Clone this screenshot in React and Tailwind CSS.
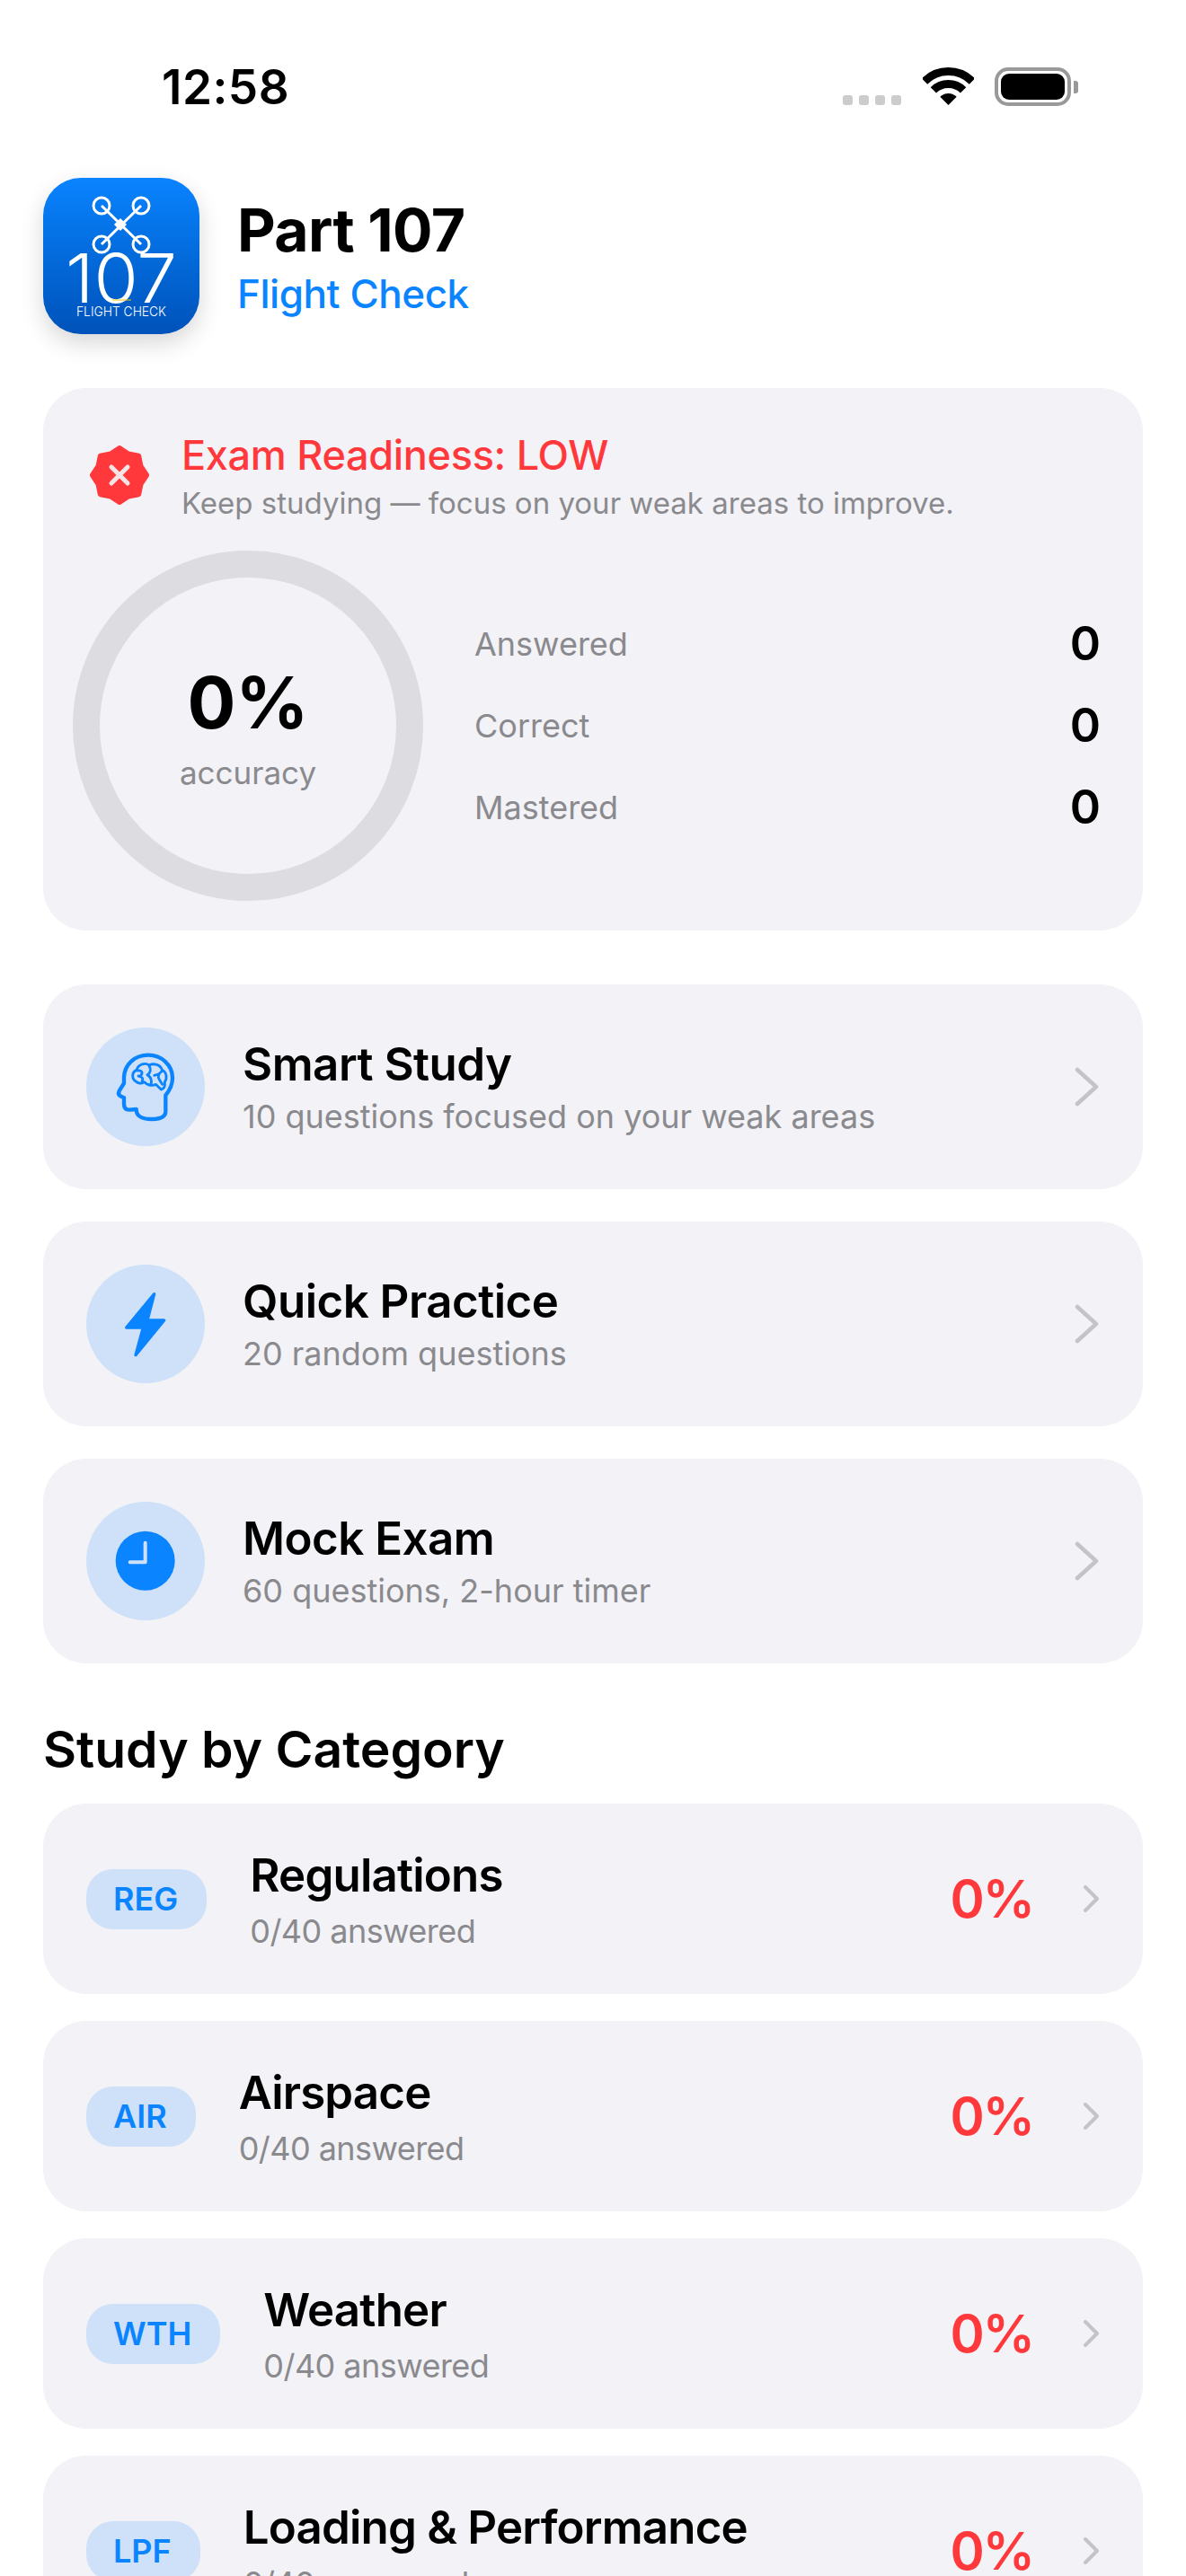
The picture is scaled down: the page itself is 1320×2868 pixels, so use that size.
import React from 'react';

const sealPoints = () => {
  const pts = [];
  for (let i = 0; i < 16; i++) {
    const r = i % 2 === 0 ? 30 : 25.5;
    const a = (i * Math.PI) / 8 - Math.PI / 2;
    pts.push(`${(33 + r * Math.cos(a)).toFixed(2)},${(33 + r * Math.sin(a)).toFixed(2)}`);
  }
  return pts.join(' ');
};

const Chevron = ({ big }) => (
  <svg
    width={big ? 27 : 17}
    height={big ? 44 : 30}
    viewBox={big ? '0 0 27 44' : '0 0 17 30'}
    fill="none"
    stroke="#c4c4c8"
    strokeWidth={big ? 4.5 : 4}
    strokeLinecap="round"
    strokeLinejoin="round"
    className="shrink-0 mr-[1px]"
  >
    <polyline points={big ? '3,3 24,22 3,41' : '2,2 15,15 2,28'} />
  </svg>
);

const AppIcon = () => (
  <div className="size-[174px] shrink-0 rounded-[42px] bg-gradient-to-b from-[#0a84ff] to-[#0052b9] shadow-[0_10px_26px_rgba(0,0,0,0.16)] overflow-hidden">
    <svg width="174" height="174" viewBox="0 0 174 174" fill="none">
      <g stroke="#fff" strokeWidth="3">
        <line x1="65" y1="31" x2="109" y2="74" />
        <line x1="109" y1="31" x2="65" y2="74" />
        <circle cx="65" cy="31" r="9" strokeWidth="3" />
        <circle cx="109" cy="31" r="9" strokeWidth="3" />
        <circle cx="65" cy="74" r="9" strokeWidth="3" />
        <circle cx="109" cy="74" r="9" strokeWidth="3" />
      </g>
      <rect x="81" y="47" width="10" height="10" fill="#fff" transform="rotate(45 86 52)" />
      <text x="87" y="139" textAnchor="middle" fill="#fff" fontFamily="Inter, sans-serif" fontSize="76" fontWeight="300" textLength="124" lengthAdjust="spacingAndGlyphs">107</text>
      <line x1="77" y1="136" x2="98" y2="136" stroke="#f5c400" strokeWidth="1" />
      <text x="87" y="154" textAnchor="middle" fill="#fff" fontFamily="Inter, sans-serif" fontSize="15" fontWeight="300" textLength="100" lengthAdjust="spacingAndGlyphs">FLIGHT CHECK</text>
    </svg>
  </div>
);

const BrainIcon = () => (
  <svg width="132" height="132" viewBox="78 72 396 396" fill="none" stroke="#0a84ff" strokeWidth="13" strokeLinecap="round" strokeLinejoin="round">
    <path d="M343 298 L343 352 C343 370 325 378 298 378 C268 378 245 372 245 345 L222 347 C210 347 204 340 204 328 L204 306 L194 302 C186 298 184 292 188 284 L204 258 L204 238 C206 195 240 164 285 164 C330 164 366 198 366 240 C366 262 358 280 343 298 Z" />
    <g strokeWidth="8.5">
      <path d="M244 252 C230 244 228 222 246 214 C252 194 276 188 288 198 C304 190 326 196 331 214 C348 222 348 244 340 254 C342 268 338 278 328 279 L310 262 C296 268 280 264 272 254 C262 262 250 258 244 252 Z" />
      <path d="M250 216 C264 214 268 224 260 232 M252 234 C264 236 270 242 264 252" />
      <path d="M288 200 C296 212 292 224 282 230 C292 236 298 246 294 260" />
      <path d="M331 218 C318 226 316 238 322 246 L332 262 M305 232 L318 228" />
    </g>
  </svg>
);

const BoltIcon = () => (
  <svg width="132" height="132" viewBox="78 54 396 396" fill="#0a84ff" stroke="#0a84ff" strokeWidth="10" strokeLinejoin="round">
    <path d="M305 152 L212 264 L268 264 L243 356 L338 240 L282 240 Z" />
  </svg>
);

const ClockIcon = () => (
  <svg width="132" height="132" viewBox="78 846 396 396" fill="none">
    <circle cx="275" cy="1043" r="99" fill="#0a84ff" />
    <polyline points="275,983 275,1048 224,1048" stroke="#cfe1f8" strokeWidth="12" strokeLinecap="round" strokeLinejoin="round" />
  </svg>
);

const actions = [
  { title: 'Smart Study', sub: '10 questions focused on your weak areas', icon: <BrainIcon /> },
  { title: 'Quick Practice', sub: '20 random questions', icon: <BoltIcon /> },
  { title: 'Mock Exam', sub: '60 questions, 2-hour timer', icon: <ClockIcon /> },
];

const categories = [
  { code: 'REG', title: 'Regulations' },
  { code: 'AIR', title: 'Airspace' },
  { code: 'WTH', title: 'Weather' },
  { code: 'LPF', title: 'Loading & Performance' },
];

const stats = ['Answered', 'Correct', 'Mastered'];

export default function App() {
  return (
    <div className="w-[1320px] h-[2868px] overflow-hidden bg-white text-black font-['Inter',sans-serif]">
      {/* status bar */}
      <div className="h-[198px] pl-[180px] pr-[120px] flex justify-between items-start">
        <span className="mt-[69px] text-[53px] leading-[56px] font-semibold tracking-[0.5px]">12:58</span>
        <div className="mt-[75px] flex items-start">
          <div className="mt-[31px] flex gap-[7px]">
            <div className="size-[11px] rounded-[3px] bg-[#cccccc]" />
            <div className="size-[11px] rounded-[3px] bg-[#cccccc]" />
            <div className="size-[11px] rounded-[3px] bg-[#cccccc]" />
            <div className="size-[11px] rounded-[3px] bg-[#cccccc]" />
          </div>
          <svg className="ml-[24px]" width="57" height="42" viewBox="0 0 57 42" fill="none" stroke="#000" strokeWidth="9">
            <path d="M2 15.5 A37.5 37.5 0 0 1 55 15.5" />
            <path d="M11.9 25.4 A23.5 23.5 0 0 1 45.1 25.4" />
            <path d="M28.5 42 L19.3 32.8 A13 13 0 0 1 37.7 32.8 Z" fill="#000" stroke="none" />
          </svg>
          <div className="ml-[23px] flex items-center h-[43px]">
            <div className="w-[85px] h-[43px] rounded-[15px] border-[4px] border-[#999999] p-[3px]">
              <div className="w-full h-full rounded-[9px] bg-black" />
            </div>
            <div className="ml-[3px] w-[5px] h-[14px] rounded-r-[3px] bg-[#999999]" />
          </div>
        </div>
      </div>

      <div className="px-12 flex flex-col">
        {/* app header */}
        <div className="flex items-center gap-[42px]">
          <AppIcon />
          <div className="flex flex-col">
            <span className="text-[66px] leading-[78px] font-bold tracking-[-0.6px]">Part 107</span>
            <span className="mt-[5px] text-[44px] leading-[54px] font-medium tracking-[-0.45px] text-[#0a84ff]">Flight Check</span>
          </div>
        </div>

        {/* readiness card */}
        <div className="mt-[60px] rounded-[48px] bg-[#f2f2f7] p-12">
          <div className="flex items-center gap-[36px]">
            <svg width="66" height="66" viewBox="0 0 66 66" className="ml-[4px] -mt-[3px] shrink-0">
              <polygon points={sealPoints()} fill="#ff383c" stroke="#ff383c" strokeWidth="6" strokeLinejoin="round" />
              <path d="M24 24 L42 42 M42 24 L24 42" stroke="#f6e3e6" strokeWidth="5" strokeLinecap="round" />
            </svg>
            <div className="flex flex-col">
              <span className="text-[45px] leading-[54px] font-medium tracking-[-0.3px] text-[#ff383c]">Exam Readiness: LOW</span>
              <span className="mt-[5px] text-[33px] leading-[42px] text-[#8a8a8e]">Keep studying — focus on your weak areas to improve.</span>
            </div>
          </div>
          <div className="mt-[47px] flex items-center gap-[72px]">
            <div className="relative size-[360px] shrink-0">
              <svg width="360" height="360" className="overflow-visible">
                <circle cx="180" cy="180" r="180" fill="none" stroke="#dcdce1" strokeWidth="30" />
              </svg>
              <div className="absolute inset-0 flex flex-col items-center justify-center">
                <span className="text-[80px] leading-[96px] font-bold">0%</span>
                <span className="mt-[8px] text-[35px] leading-[44px] text-[#8a8a8e]">accuracy</span>
              </div>
            </div>
            <div className="flex-1 flex flex-col gap-[37px]">
              {stats.map((s) => (
                <div key={s} className="h-[54px] flex items-center justify-between">
                  <span className="text-[36px] text-[#8a8a8e]">{s}</span>
                  <span className="mr-[-1px] text-[52px] leading-[54px] font-semibold">0</span>
                </div>
              ))}
            </div>
          </div>
        </div>

        {/* study modes */}
        <div className="mt-[60px] flex flex-col gap-[36px]">
          {actions.map((a) => (
            <div key={a.title} className="h-[228px] rounded-[48px] bg-[#f2f2f7] px-12 flex items-center">
              <div className="size-[132px] shrink-0 rounded-full bg-[#cfe1f8]">{a.icon}</div>
              <div className="ml-[42px] flex-1 flex flex-col">
                <span className="text-[51px] leading-[64px] font-semibold tracking-[-0.5px]">{a.title}</span>
                <span className="mt-[2px] text-[36px] leading-[48px] text-[#8a8a8e]">{a.sub}</span>
              </div>
              <Chevron big />
            </div>
          ))}
        </div>

        {/* categories */}
        <h2 className="mt-[60px] text-[57px] leading-[72px] font-semibold">Study by Category</h2>
        <div className="mt-[24px] flex flex-col gap-[30px]">
          {categories.map((c) => (
            <div key={c.code} className="h-[212px] shrink-0 rounded-[48px] bg-[#f2f2f7] px-12 flex items-center">
              <div className="h-[67px] pl-[30px] pr-[32px] shrink-0 rounded-[30px] bg-[#cfe1f8] flex items-center text-[36px] font-semibold text-[#0a84ff]">{c.code}</div>
              <div className="ml-[48px] pt-[4px] flex-1 flex flex-col">
                <span className="text-[51px] leading-[62px] font-semibold tracking-[-0.8px]">{c.title}</span>
                <span className="mt-[6px] text-[36px] leading-[50px] tracking-[-0.55px] text-[#8a8a8e]">0/40 answered</span>
              </div>
              <span className="mr-[56px] text-[58px] font-semibold tracking-[-2px] text-[#ff383c]">0%</span>
              <Chevron />
            </div>
          ))}
        </div>
      </div>
    </div>
  );
}
